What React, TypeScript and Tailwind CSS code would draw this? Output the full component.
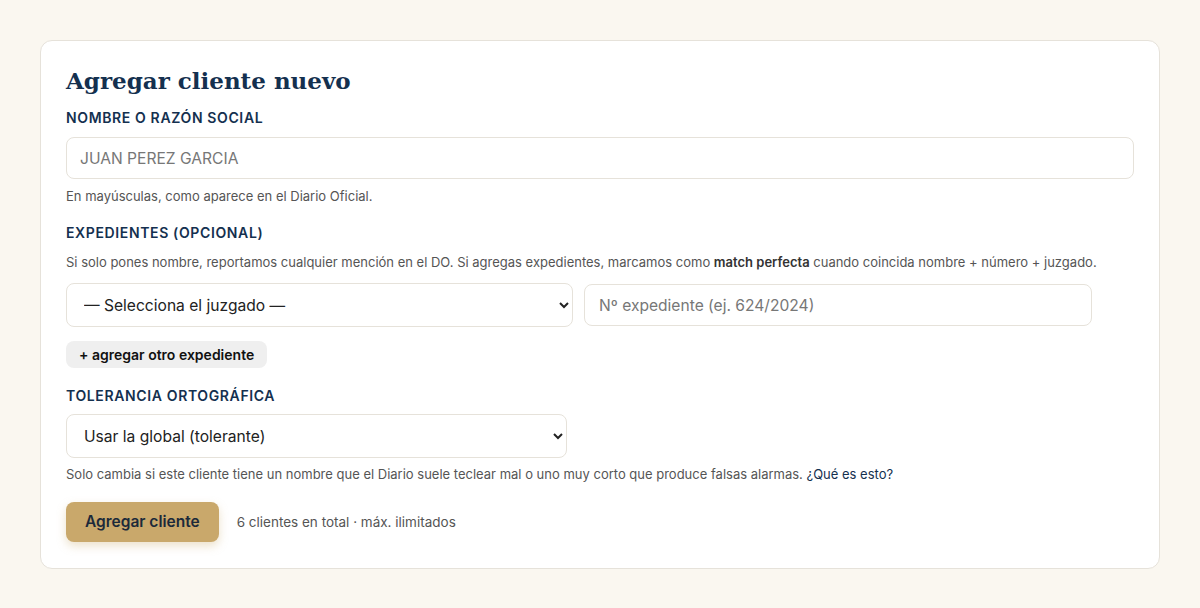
const sans = { fontFamily: 'Inter, "Noto Sans", sans-serif' };

function Label({ children }: { children: React.ReactNode }) {
  return (
    <div className="text-[14px] font-semibold tracking-[0.045em] text-[#14304f] leading-5">
      {children}
    </div>
  );
}

export default function App() {
  return (
    <div className="min-h-[608px] bg-[#faf7f0] px-10 pt-10 pb-10" style={sans}>
      <div className="rounded-xl border border-[#e6e2da] bg-white px-[25px] pt-[22px] pb-[26px]">
        <h1
          className="text-[23px] font-bold leading-9 text-[#14304f]"
          style={{ fontFamily: '"DejaVu Serif", "Liberation Serif", serif' }}
        >
          Agregar cliente nuevo
        </h1>

        <div className="mt-[9px]">
          <Label>NOMBRE O RAZÓN SOCIAL</Label>
          <input
            className="mt-[9px] block h-[42px] w-full rounded-lg border border-[#e6e2da] px-[13px] text-[15.6px] text-[#222] placeholder:text-[#777] outline-none"
            placeholder="JUAN PEREZ GARCIA"
          />
          <p className="mt-[7px] text-[13px] leading-5 text-[#555]">
            En mayúsculas, como aparece en el Diario Oficial.
          </p>
        </div>

        <div className="mt-[17px]">
          <Label>EXPEDIENTES (OPCIONAL)</Label>
          <p className="mt-[9px] text-[13px] leading-5 text-[#555]">
            Si solo pones nombre, reportamos cualquier mención en el DO. Si agregas expedientes, marcamos como{' '}
            <b className="font-semibold text-[#333]">match perfecta</b> cuando coincida nombre + número + juzgado.
          </p>
          <div className="mt-[11px] flex items-start gap-[11px]">
            <select className="h-[44px] w-[507px] rounded-lg border border-[#e6e2da] bg-white pl-[13px] pr-2 text-[15.6px] text-[#222]">
              <option>— Selecciona el juzgado —</option>
            </select>
            <input
              className="mt-px h-[42px] w-[508px] rounded-lg border border-[#e6e2da] px-[14px] text-[15.6px] placeholder:text-[#777] outline-none"
              placeholder="Nº expediente (ej. 624/2024)"
            />
          </div>
          <button className="mt-[14px] h-[27px] rounded-lg bg-[#efefef] px-[13px] text-[14px] font-semibold text-[#111]">
            + agregar otro expediente
          </button>
        </div>

        <div className="mt-[18px]">
          <Label>TOLERANCIA ORTOGRÁFICA</Label>
          <select className="mt-[8px] block h-[44px] w-[501px] rounded-lg border border-[#e6e2da] bg-white pl-[13px] pr-2 text-[15.6px] text-[#222]">
            <option>Usar la global (tolerante)</option>
          </select>
          <p className="mt-[6px] text-[13px] leading-5 text-[#555]">
            Solo cambia si este cliente tiene un nombre que el Diario suele teclear mal o uno muy corto que produce falsas alarmas.{' '}
            <a className="text-[#14304f]">¿Qué es esto?</a>
          </p>
        </div>

        <div className="mt-[18px] flex items-center gap-[18px]">
          <button className="h-[40px] rounded-lg bg-[#c9a86b] px-[19px] text-[15.5px] font-semibold text-[#1c2a3a] shadow-[0_4px_10px_rgba(201,168,107,0.35)]">
            Agregar cliente
          </button>
          <span className="text-[13.5px] text-[#555]">6 clientes en total · máx. ilimitados</span>
        </div>
      </div>
    </div>
  );
}
